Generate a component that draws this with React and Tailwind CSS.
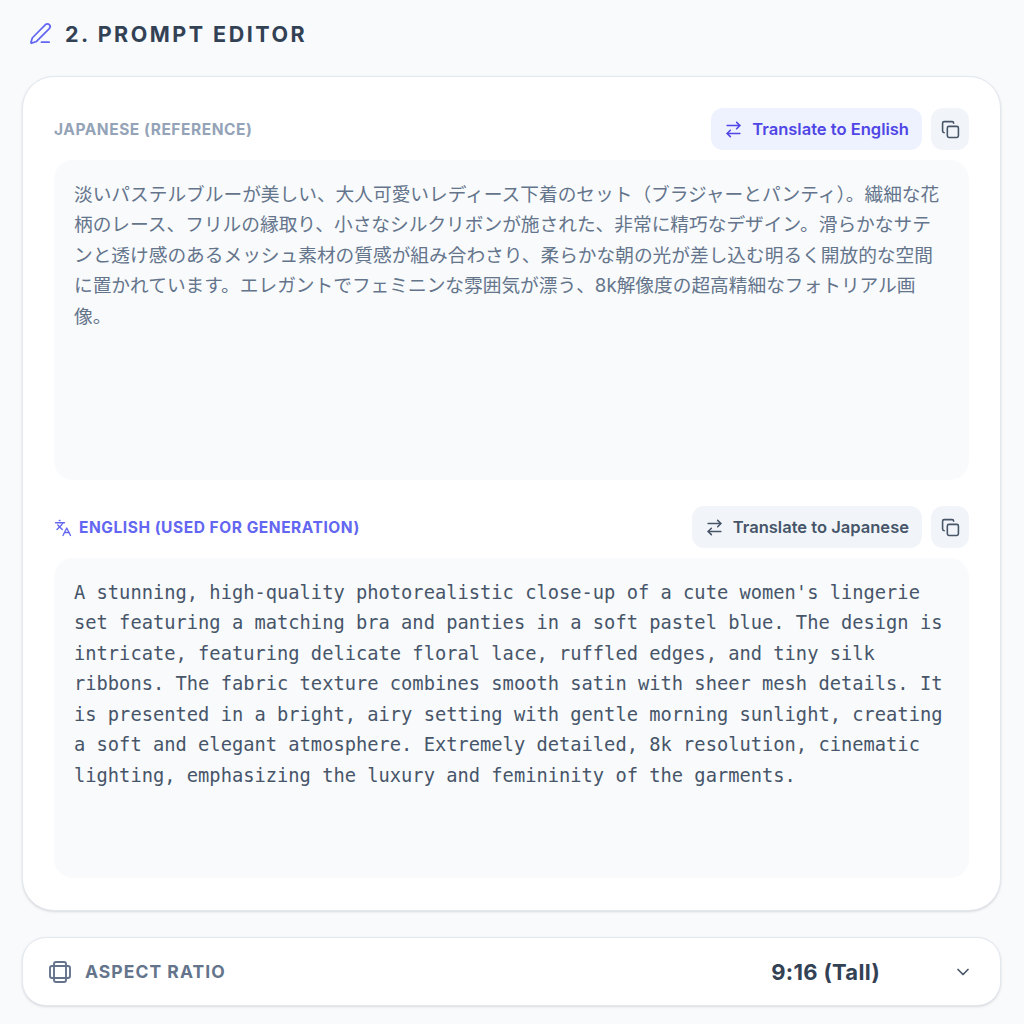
import React from "react";
import { ArrowRightLeft, ChevronDown, Copy, Languages, PenLine, Ratio } from "lucide-react";

const sans = "font-['Inter','Noto_Sans_CJK_JP',sans-serif]";

const japanese =
  "淡いパステルブルーが美しい、大人可愛いレディース下着のセット（ブラジャーとパンティ）。繊細な花柄のレース、フリルの縁取り、小さなシルクリボンが施された、非常に精巧なデザイン。滑らかなサテンと透け感のあるメッシュ素材の質感が組み合わさり、柔らかな朝の光が差し込む明るく開放的な空間に置かれています。エレガントでフェミニンな雰囲気が漂う、8k解像度の超高精細なフォトリアル画像。";

const english =
  "A stunning, high-quality photorealistic close-up of a cute women's lingerie set featuring a matching bra and panties in a soft pastel blue. The design is intricate, featuring delicate floral lace, ruffled edges, and tiny silk ribbons. The fabric texture combines smooth satin with sheer mesh details. It is presented in a bright, airy setting with gentle morning sunlight, creating a soft and elegant atmosphere. Extremely detailed, 8k resolution, cinematic lighting, emphasizing the luxury and femininity of the garments.";

function CopyButton() {
  return (
    <button
      type="button"
      className="flex h-[42px] w-[38px] items-center justify-center rounded-[12px] bg-[#f1f5f9] text-[#475569]"
    >
      <Copy size={19} strokeWidth={2} />
    </button>
  );
}

function TranslateButton({ label, active }) {
  return (
    <button
      type="button"
      className={`flex h-[42px] items-center gap-[9px] rounded-[12px] px-[13px] text-[16.55px] font-semibold ${
        active ? "bg-[#eef2ff] text-[#4f46e5]" : "bg-[#f1f5f9] text-[#475569]"
      }`}
    >
      <ArrowRightLeft size={19} strokeWidth={2} />
      <span className="pt-[1px]">{label}</span>
    </button>
  );
}

export default function App() {
  return (
    <div className={`h-[1024px] overflow-hidden bg-[#f8fafc] pr-[23px] pl-[22px] ${sans}`}>
      <header className="flex h-[76px] items-start gap-[13px] pl-[7px] pt-[22px]">
        <PenLine size={23} strokeWidth={1.8} className="text-[#6366f1]" />
        <h2 className="text-[21.5px] leading-[25px] font-bold tracking-[0.116em] text-[#334155]">
          2. PROMPT EDITOR
        </h2>
      </header>

      <section className="rounded-[32px] border border-[#e2e8f0] bg-white px-[31px] pt-[31px] pb-[32px] shadow-sm">
        <div className="mb-[10px] flex items-center justify-between">
          <span className="pt-[1px] text-[15.5px] font-bold tracking-[0.035em] text-[#94a3b8]">
            JAPANESE (REFERENCE)
          </span>
          <div className="flex gap-[9px]">
            <TranslateButton label="Translate to English" active />
            <CopyButton />
          </div>
        </div>
        <div className="h-[320px] rounded-[19px] bg-[#f8fafc] px-[20px] pt-[20px] text-[18.7px] leading-[30.4px] text-[#64748b]">
          {japanese}
        </div>

        <div className="mt-[26px] mb-[10px] flex items-center justify-between">
          <span className="flex items-center gap-[7px] pt-[1px] text-[15.5px] font-bold tracking-[0.035em] text-[#6366f1]">
            <Languages size={18} strokeWidth={1.8} />
            ENGLISH (USED FOR GENERATION)
          </span>
          <div className="flex gap-[9px]">
            <TranslateButton label="Translate to Japanese" />
            <CopyButton />
          </div>
        </div>
        <div className="h-[320px] rounded-[19px] bg-[#f8fafc] px-[20px] pt-[20px] font-['DejaVu_Sans_Mono',monospace] text-[18.74px] leading-[30.45px] text-[#475569]">
          {english}
        </div>
      </section>

      <section className="mt-[26px] flex h-[69px] items-center rounded-[24px] border border-[#e2e8f0] bg-white pl-[25px] pr-[27px] shadow-sm">
        <Ratio size={24} strokeWidth={1.9} className="text-[#64748b]" />
        <span className="ml-[13px] pt-[2px] text-[17.5px] font-bold tracking-[0.06em] text-[#64748b]">
          ASPECT RATIO
        </span>
        <span className="mr-[73px] ml-auto pt-[2px] text-[22px] font-bold tracking-[0.014em] text-[#334155]">
          9:16 (Tall)
        </span>
        <ChevronDown size={20} strokeWidth={2} className="text-[#475569]" />
      </section>
    </div>
  );
}
